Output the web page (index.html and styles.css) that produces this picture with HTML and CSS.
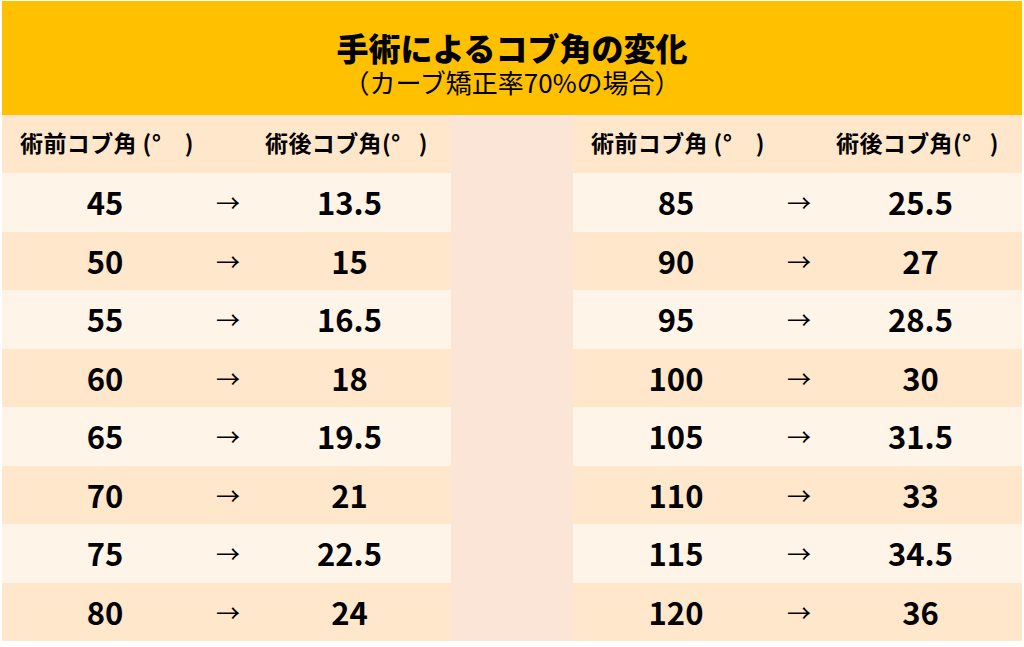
FILE: index.html
```html
<!DOCTYPE html>
<html lang="ja">
<head>
<meta charset="utf-8">
<title>手術によるコブ角の変化</title>
<link rel="stylesheet" href="styles.css">
</head>
<body>
<div class="sheet">
  <header class="band">
    <h1 class="title">手術によるコブ角の変化</h1>
    <p class="subtitle">（カーブ矯正率70%の場合）</p>
  </header>
  <div class="tables">
    <div class="table">
      <div class="row head"><div class="hc">術前コブ角 (°　)</div><div></div><div class="hc">術後コブ角(°&#8194;&#8197;)</div></div>
      <div class="row odd"><div class="num">45</div><div class="arr">→</div><div class="num">13.5</div></div>
      <div class="row even"><div class="num">50</div><div class="arr">→</div><div class="num">15</div></div>
      <div class="row odd"><div class="num">55</div><div class="arr">→</div><div class="num">16.5</div></div>
      <div class="row even"><div class="num">60</div><div class="arr">→</div><div class="num">18</div></div>
      <div class="row odd"><div class="num">65</div><div class="arr">→</div><div class="num">19.5</div></div>
      <div class="row even"><div class="num">70</div><div class="arr">→</div><div class="num">21</div></div>
      <div class="row odd"><div class="num">75</div><div class="arr">→</div><div class="num">22.5</div></div>
      <div class="row even"><div class="num">80</div><div class="arr">→</div><div class="num">24</div></div>
    </div>
    <div class="gap"></div>
    <div class="table">
      <div class="row head"><div class="hc">術前コブ角 (°　)</div><div></div><div class="hc">術後コブ角(°&#8194;&#8197;)</div></div>
      <div class="row odd"><div class="num">85</div><div class="arr">→</div><div class="num">25.5</div></div>
      <div class="row even"><div class="num">90</div><div class="arr">→</div><div class="num">27</div></div>
      <div class="row odd"><div class="num">95</div><div class="arr">→</div><div class="num">28.5</div></div>
      <div class="row even"><div class="num">100</div><div class="arr">→</div><div class="num">30</div></div>
      <div class="row odd"><div class="num">105</div><div class="arr">→</div><div class="num">31.5</div></div>
      <div class="row even"><div class="num">110</div><div class="arr">→</div><div class="num">33</div></div>
      <div class="row odd"><div class="num">115</div><div class="arr">→</div><div class="num">34.5</div></div>
      <div class="row even"><div class="num">120</div><div class="arr">→</div><div class="num">36</div></div>
    </div>
  </div>
</div>
</body>
</html>
```

FILE: styles.css
```css
html, body {
  margin: 0;
  padding: 0;
  background: #ffffff;
}
body {
  font-family: "Noto Sans CJK JP", "Noto Sans", sans-serif;
  color: #000000;
}
.sheet {
  width: 1020px;
  margin: 1px 0 0 2px;
}
.band {
  box-sizing: border-box;
  height: 114px;
  padding-top: 26px;
  background: #FFC000;
  display: flex;
  flex-direction: column;
  align-items: center;
}
.title {
  margin: 0;
  font-size: 32px;
  line-height: 40px;
  font-weight: 900;
}
.subtitle {
  margin: 0;
  font-size: 26px;
  line-height: 30px;
  font-weight: 400;
}
.tables {
  display: grid;
  grid-template-columns: 449px 122px 449px;
}
.gap {
  background: #FBE5D6;
}
.table {
  display: flex;
  flex-direction: column;
}
.row {
  display: grid;
  grid-template-columns: 206px 40px 203px;
  align-items: center;
  height: 58.5px;
}
.row.head {
  height: 58px;
  background: #FFE7CC;
}
.row.odd {
  background: #FFF4E8;
}
.row.even {
  background: #FFE7CC;
}
.hc {
  font-size: 23px;
  letter-spacing: 0.4px;
  font-weight: 700;
  padding-left: 18px;
  white-space: pre;
  line-height: 30px;
  transform: translateY(-2px);
}
.row.head .hc:last-child {
  padding-left: 17px;
}
.num {
  text-align: center;
  font-size: 31px;
  font-weight: 700;
  line-height: 40px;
}
.arr {
  text-align: center;
  font-size: 24px;
  font-weight: 400;
  line-height: 30px;
}
```
